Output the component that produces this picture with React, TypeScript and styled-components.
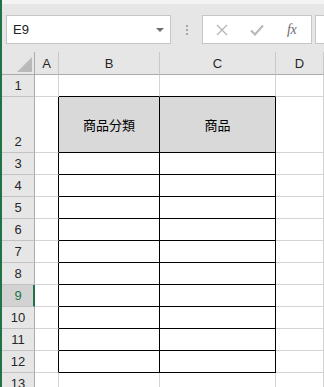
import React from 'react';
import styled, { createGlobalStyle } from 'styled-components';

const GlobalStyle = createGlobalStyle`
  html, body {
    margin: 0;
    padding: 0;
    background: #ffffff;
    overflow: hidden;
  }
  body {
    font-family: "Liberation Sans", "Noto Sans CJK JP", sans-serif;
  }
  * {
    box-sizing: border-box;
  }
`;

const columns = ['A', 'B', 'C', 'D'];
const rowNumbers = Array.from({ length: 13 }, (_, i) => i + 1);
const selectedRow = 9;
const headings: Record<string, string> = { B: '商品分類', C: '商品' };

// 表の範囲 (B2:C12)
const inTable = (col: string) => col === 'B' || col === 'C';

export default function App() {
  return (
    <>
      <GlobalStyle />
      <Style.Window>
        <Style.TopStrip />
        <Style.FormulaBar>
          <Style.NameBox>
            <span>E9</span>
            <Style.DropArrow />
          </Style.NameBox>
          <Style.Grip>
            <i />
            <i />
            <i />
          </Style.Grip>
          <Style.ButtonBox>
            <Style.IconButton>
              <svg width="12" height="12" viewBox="0 0 12 12">
                <path d="M1 1 L11 11 M11 1 L1 11" stroke="#b7b7b7" strokeWidth="1.4" fill="none" />
              </svg>
            </Style.IconButton>
            <Style.IconButton>
              <svg width="14" height="12" viewBox="0 0 14 12">
                <path d="M1 6.5 L5 10.5 L13 1.5" stroke="#b7b7b7" strokeWidth="2" fill="none" />
              </svg>
            </Style.IconButton>
            <Style.IconButton>
              <Style.Fx>fx</Style.Fx>
            </Style.IconButton>
          </Style.ButtonBox>
          <Style.FormulaInput />
        </Style.FormulaBar>

        <Style.Sheet>
          <Style.Corner>
            <svg width="15" height="15" viewBox="0 0 15 15">
              <polygon points="15,0 15,15 0,15" fill="#b9b9b9" />
            </svg>
          </Style.Corner>
          {columns.map(col => (
            <Style.ColHeader key={col}>{col}</Style.ColHeader>
          ))}

          {rowNumbers.map(row => (
            <React.Fragment key={row}>
              <Style.RowHeader $selected={row === selectedRow} $tall={row === 2}>
                {row}
              </Style.RowHeader>
              {columns.map(col => {
                const boxedRow = row >= 2 && row <= 12;
                const rightBlack = (col === 'A' || inTable(col)) && boxedRow;
                const bottomBlack = inTable(col) && row >= 1 && row <= 12;
                const isHeading = row === 2 && inTable(col);
                return (
                  <Style.Cell
                    key={col}
                    $rightBlack={rightBlack}
                    $bottomBlack={bottomBlack}
                    $fill={isHeading}
                  >
                    {isHeading ? headings[col] : null}
                  </Style.Cell>
                );
              })}
            </React.Fragment>
          ))}
        </Style.Sheet>
      </Style.Window>
    </>
  );
}

const Style = {
  Window: styled.div`
    width: 324px;
    height: 387px;
    overflow: hidden;
    border-left: 2px solid #217346;
    background: #e6e6e6;
    display: flex;
    flex-direction: column;
  `,
  TopStrip: styled.div`
    height: 4px;
    background: #f3f3f3;
    flex: none;
  `,
  FormulaBar: styled.div`
    height: 48px;
    flex: none;
    display: flex;
    align-items: flex-start;
    padding: 11px 0 0 4px;
  `,
  NameBox: styled.div`
    width: 165px;
    height: 29px;
    background: #ffffff;
    border: 1px solid #c6c6c6;
    display: flex;
    align-items: center;
    justify-content: space-between;
    padding: 0 6px 0 6px;
    font-size: 13px;
    color: #222222;
  `,
  DropArrow: styled.span`
    width: 0;
    height: 0;
    border-left: 4px solid transparent;
    border-right: 4px solid transparent;
    border-top: 4px solid #6f6f6f;
  `,
  Grip: styled.div`
    width: 31px;
    height: 29px;
    display: flex;
    flex-direction: column;
    align-items: center;
    justify-content: center;
    gap: 2px;
    i {
      display: block;
      width: 2px;
      height: 2px;
      background: #a6a6a6;
    }
  `,
  ButtonBox: styled.div`
    width: 110px;
    height: 29px;
    background: #ffffff;
    border: 1px solid #c6c6c6;
    display: grid;
    grid-template-columns: repeat(3, 1fr);
    align-items: center;
    justify-items: center;
    padding: 0 2px;
  `,
  IconButton: styled.div`
    display: flex;
    align-items: center;
    justify-content: center;
    height: 100%;
  `,
  Fx: styled.span`
    font-family: "Liberation Serif", serif;
    font-style: italic;
    font-size: 14px;
    color: #6b6b6b;
    letter-spacing: -0.5px;
  `,
  FormulaInput: styled.div`
    margin-left: 3px;
    flex: 1;
    height: 29px;
    background: #ffffff;
    border: 1px solid #c6c6c6;
    border-right: none;
  `,
  Sheet: styled.div`
    flex: 1;
    display: grid;
    grid-template-columns: 33px 24px 101px 116px 1fr;
    grid-template-rows: 23px 22px 56px repeat(11, 22px);
    background: #ffffff;
  `,
  Corner: styled.div`
    background: #e6e6e6;
    border-right: 1px solid #ababab;
    border-bottom: 1px solid #ababab;
    display: flex;
    align-items: flex-end;
    justify-content: flex-end;
    padding: 0 2px 2px 0;
  `,
  ColHeader: styled.div`
    background: #e6e6e6;
    border-right: 1px solid #c9c9c9;
    border-bottom: 1px solid #ababab;
    display: flex;
    align-items: center;
    justify-content: center;
    font-size: 13px;
    color: #262626;
  `,
  RowHeader: styled.div<{ $selected: boolean; $tall: boolean }>`
    background: ${p => (p.$selected ? '#d2d2d2' : '#e6e6e6')};
    border-right: ${p => (p.$selected ? '2px solid #217346' : '1px solid #ababab')};
    border-bottom: 1px solid #c3c3c3;
    display: flex;
    align-items: ${p => (p.$tall ? 'flex-end' : 'center')};
    justify-content: center;
    padding-bottom: ${p => (p.$tall ? '3px' : '0')};
    padding-left: ${p => (p.$selected ? '1px' : '0')};
    font-size: 13px;
    color: ${p => (p.$selected ? '#217346' : '#262626')};
  `,
  Cell: styled.div<{ $rightBlack: boolean; $bottomBlack: boolean; $fill: boolean }>`
    background: ${p => (p.$fill ? '#d9d9d9' : '#ffffff')};
    border-right: 1px solid ${p => (p.$rightBlack ? '#000000' : '#d4d4d4')};
    border-bottom: 1px solid ${p => (p.$bottomBlack ? '#000000' : '#d4d4d4')};
    display: flex;
    align-items: center;
    justify-content: center;
    font-family: "Noto Sans CJK JP", "Liberation Sans", sans-serif;
    font-size: 13px;
    color: #000000;
  `,
};
